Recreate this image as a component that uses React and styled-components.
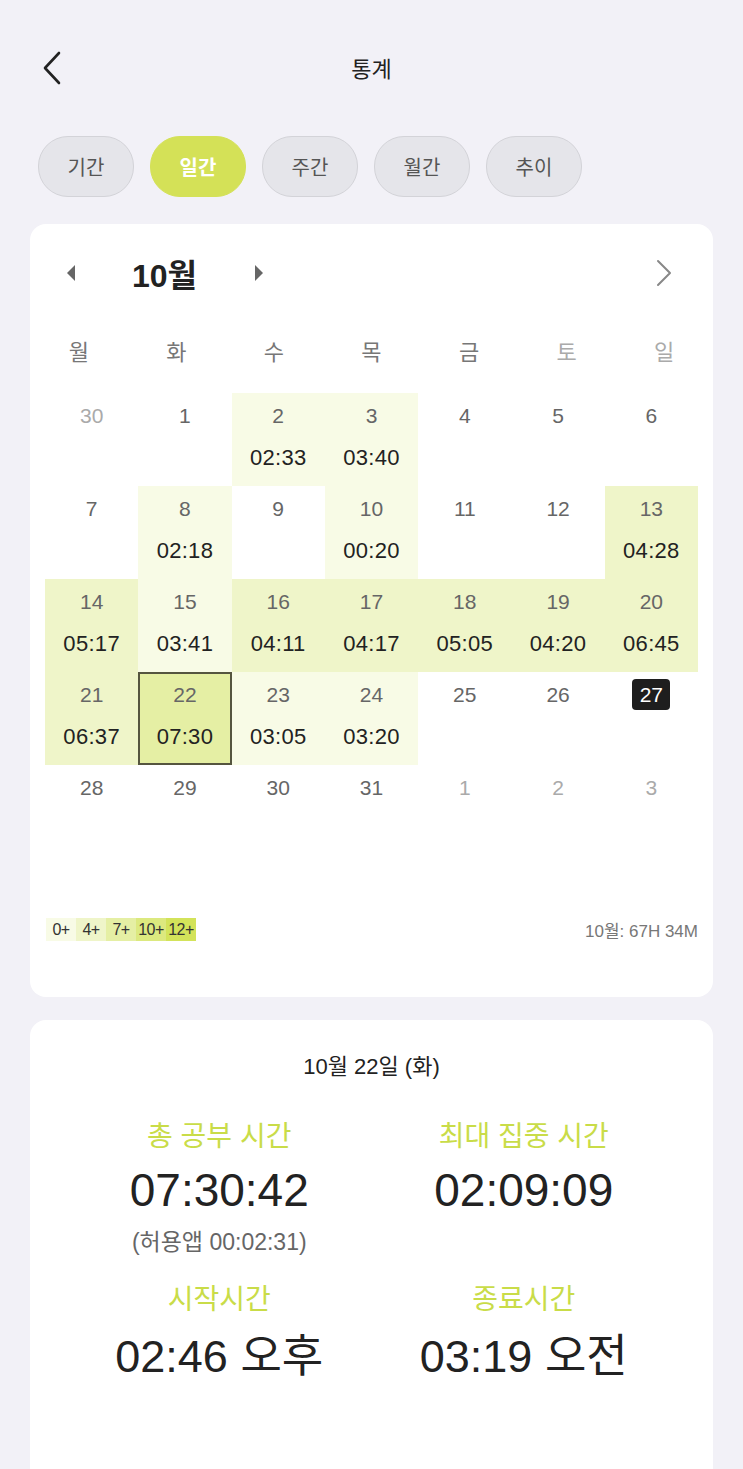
import React from 'react';
import styled, { createGlobalStyle } from 'styled-components';

const GlobalStyle = createGlobalStyle`
  html, body {
    margin: 0;
    padding: 0;
    background: #f2f1f7;
    font-family: "Liberation Sans", "Noto Sans CJK KR", sans-serif;
    color: #222;
  }
`;

const Page = styled.div`
  width: 743px;
  height: 1469px;
  overflow: hidden;
  background: #f2f1f7;
`;

const Header = styled.div`
  height: 54px;
  margin-top: 40px;
  display: flex;
  align-items: center;
  justify-content: center;
  position: relative;
`;

const BackButton = styled.div`
  position: absolute;
  left: 40px;
  top: 10px;
  width: 28px;
  height: 36px;
`;

const Title = styled.div`
  font-size: 22px;
  color: #222;
`;

const Tabs = styled.div`
  display: flex;
  gap: 16px;
  padding: 0 38px;
  margin-top: 42px;
`;

const Tab = styled.div`
  width: 96px;
  height: 61px;
  box-sizing: border-box;
  border-radius: 30px;
  display: flex;
  align-items: center;
  justify-content: center;
  font-size: 20px;
  background: ${p => (p.active ? '#d4e157' : '#e5e5ea')};
  border: 1px solid ${p => (p.active ? '#d4e157' : '#d3d3d8')};
  color: ${p => (p.active ? '#fff' : '#555')};
  font-weight: ${p => (p.active ? 700 : 400)};
`;

const Card = styled.div`
  margin: ${p => p.top}px 30px 0;
  background: #fff;
  border-radius: 16px;
  box-sizing: border-box;
`;

const CalendarCard = styled(Card)`
  height: 773px;
  padding: 24px 15px 0;
`;

const MonthBar = styled.div`
  height: 50px;
  display: flex;
  align-items: center;
  padding-left: 21px;
  padding-right: 25px;
`;

const MonthTitle = styled.div`
  font-size: 32px;
  font-weight: 700;
  color: #222;
  margin: 0 57px 0 56px;
`;

const Spacer = styled.div`
  flex: 1;
`;

const WeekRow = styled.div`
  display: grid;
  grid-template-columns: repeat(7, 1fr);
  margin: 32px -15px 0;
  height: 40px;
  align-items: center;
`;

const WeekDay = styled.div`
  text-align: center;
  font-size: 22px;
  color: ${p => (p.weekend ? '#aaa' : '#777')};
`;

const Grid = styled.div`
  display: grid;
  grid-template-columns: repeat(7, 1fr);
  grid-auto-rows: 93px;
  margin-top: 23px;
`;

const levelColors = ['#fff', '#f8fbe6', '#eff5c9', '#e5efa4', '#dce97f', '#d3e35a'];

const Cell = styled.div`
  position: relative;
  display: flex;
  flex-direction: column;
  align-items: center;
  box-sizing: border-box;
  background: ${p => levelColors[p.level]};
  border: ${p => (p.selected ? '2px solid #55553f' : 'none')};
  padding-top: ${p => (p.selected ? 9 : 11)}px;
`;

const DayNum = styled.div`
  font-size: 21px;
  line-height: 24px;
  color: ${p => (p.muted ? '#aaa' : '#666')};
`;

const TodayBadge = styled.div`
  margin-top: -4px;
  width: 38px;
  height: 31px;
  border-radius: 4px;
  background: #1e1e1e;
  color: #fff;
  font-size: 21px;
  display: flex;
  align-items: center;
  justify-content: center;
`;

const Time = styled.div`
  margin-top: 18px;
  font-size: 22px;
  letter-spacing: 0.3px;
  line-height: 24px;
  color: #222;
`;

const Footer = styled.div`
  display: flex;
  align-items: center;
  margin-top: 59px;
  padding-left: 1px;
`;

const Legend = styled.div`
  display: flex;
`;

const LegendItem = styled.div`
  width: 30px;
  height: 23px;
  background: ${p => levelColors[p.level]};
  font-size: 16px;
  letter-spacing: -0.5px;
  color: #333;
  display: flex;
  align-items: center;
  justify-content: center;
  white-space: nowrap;
`;

const Total = styled.div`
  margin-left: auto;
  font-size: 17px;
  color: #777;
`;

const DetailCard = styled(Card)`
  height: 460px;
  padding: 34px 37px 0;
  border-radius: 16px 16px 0 0;
`;

const DateTitle = styled.div`
  text-align: center;
  font-size: 22px;
  line-height: 26px;
  color: #222;
`;

const Stats = styled.div`
  display: grid;
  grid-template-columns: 1fr 1fr;
  margin-top: 41px;
  row-gap: 28px;
`;

const Stat = styled.div`
  display: flex;
  flex-direction: column;
  align-items: center;
`;

const StatLabel = styled.div`
  font-size: 28px;
  line-height: 32px;
  color: #c9dc48;
`;

const StatValue = styled.div`
  font-size: ${p => p.size}px;
  line-height: 54px;
  margin-top: ${p => p.gap}px;
  color: #222;
`;

const StatSub = styled.div`
  font-size: 23px;
  line-height: 28px;
  margin-top: 11px;
  color: #666;
`;

const Triangle = ({ dir }) => (
  <svg width="10" height="16" viewBox="0 0 10 16">
    {dir === 'left' ? (
      <path d="M9 0 L1 8 L9 16 Z" fill="#666" />
    ) : (
      <path d="M1 0 L9 8 L1 16 Z" fill="#666" />
    )}
  </svg>
);

const weekdays = ['월', '화', '수', '목', '금', '토', '일'];

const days = [
  { d: 30, muted: true }, { d: 1 }, { d: 2, t: '02:33', l: 1 }, { d: 3, t: '03:40', l: 1 }, { d: 4 }, { d: 5 }, { d: 6 },
  { d: 7 }, { d: 8, t: '02:18', l: 1 }, { d: 9 }, { d: 10, t: '00:20', l: 1 }, { d: 11 }, { d: 12 }, { d: 13, t: '04:28', l: 2 },
  { d: 14, t: '05:17', l: 2 }, { d: 15, t: '03:41', l: 1 }, { d: 16, t: '04:11', l: 2 }, { d: 17, t: '04:17', l: 2 },
  { d: 18, t: '05:05', l: 2 }, { d: 19, t: '04:20', l: 2 }, { d: 20, t: '06:45', l: 2 },
  { d: 21, t: '06:37', l: 2 }, { d: 22, t: '07:30', l: 3, selected: true }, { d: 23, t: '03:05', l: 1 },
  { d: 24, t: '03:20', l: 1 }, { d: 25 }, { d: 26 }, { d: 27, today: true },
  { d: 28 }, { d: 29 }, { d: 30 }, { d: 31 }, { d: 1, muted: true }, { d: 2, muted: true }, { d: 3, muted: true },
];

const tabs = ['기간', '일간', '주간', '월간', '추이'];

export default function App() {
  return (
    <Page>
      <GlobalStyle />
      <Header>
        <BackButton>
          <svg width="28" height="36" viewBox="0 0 28 36">
            <path d="M19 3 L5 18 L19 33" fill="none" stroke="#222" strokeWidth="2.6" strokeLinecap="round" strokeLinejoin="round" />
          </svg>
        </BackButton>
        <Title>통계</Title>
      </Header>

      <Tabs>
        {tabs.map(t => (
          <Tab key={t} active={t === '일간'}>{t}</Tab>
        ))}
      </Tabs>

      <CalendarCard top={27}>
        <MonthBar>
          <Triangle dir="left" />
          <MonthTitle>10월</MonthTitle>
          <Triangle dir="right" />
          <Spacer />
          <svg width="18" height="28" viewBox="0 0 18 28">
            <path d="M3 2 L15 14 L3 26" fill="none" stroke="#888" strokeWidth="2" strokeLinecap="round" strokeLinejoin="round" />
          </svg>
        </MonthBar>

        <WeekRow>
          {weekdays.map((w, i) => (
            <WeekDay key={w} weekend={i >= 5}>{w}</WeekDay>
          ))}
        </WeekRow>

        <Grid>
          {days.map((c, i) => (
            <Cell key={i} level={c.l || 0} selected={c.selected}>
              {c.today ? (
                <TodayBadge>{c.d}</TodayBadge>
              ) : (
                <DayNum muted={c.muted}>{c.d}</DayNum>
              )}
              {c.t && <Time>{c.t}</Time>}
            </Cell>
          ))}
        </Grid>

        <Footer>
          <Legend>
            {['0+', '4+', '7+', '10+', '12+'].map((l, i) => (
              <LegendItem key={l} level={i + 1}>{l}</LegendItem>
            ))}
          </Legend>
          <Total>10월: 67H 34M</Total>
        </Footer>
      </CalendarCard>

      <DetailCard top={23}>
        <DateTitle>10월 22일 (화)</DateTitle>
        <Stats>
          <Stat>
            <StatLabel>총 공부 시간</StatLabel>
            <StatValue size={46} gap={10}>07:30:42</StatValue>
            <StatSub>(허용앱 00:02:31)</StatSub>
          </Stat>
          <Stat>
            <StatLabel>최대 집중 시간</StatLabel>
            <StatValue size={46} gap={10}>02:09:09</StatValue>
          </Stat>
          <Stat>
            <StatLabel>시작시간</StatLabel>
            <StatValue size={45} gap={14}>02:46 오후</StatValue>
          </Stat>
          <Stat>
            <StatLabel>종료시간</StatLabel>
            <StatValue size={45} gap={14}>03:19 오전</StatValue>
          </Stat>
        </Stats>
      </DetailCard>
    </Page>
  );
}
